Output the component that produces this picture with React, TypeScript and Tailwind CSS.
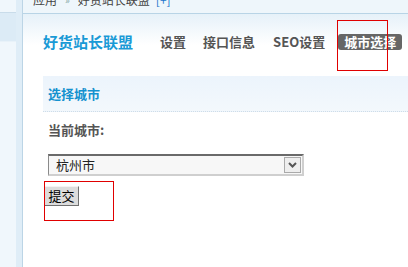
import React from "react";

const cjk = { fontFamily: '"Noto Sans CJK SC", "Noto Sans", sans-serif' };

export default function App() {
  return (
    <div className="relative w-[408px] h-[267px] overflow-hidden bg-white flex" style={cjk}>
      {/* sidebar */}
      <div className="w-[23px] h-full flex border-r border-[#bcd5e6] bg-[#dfedf7]">
        <div className="w-[16px] h-full flex flex-col bg-[#f0f7fc]">
          <div className="h-[13px] border-b border-[#c9dcea]" />
          <div className="h-[29px] bg-[#dcebf6] border-b border-[#e8f2f9]" />
          <div className="flex-1" />
        </div>
      </div>

      {/* main */}
      <div className="flex-1 flex flex-col">
        {/* top bar */}
        <div className="h-[14px] bg-[#eef6fb] border-b border-[#b8d4e6] overflow-hidden">
          <div className="mt-[-7px] pl-[10px] text-[12px] leading-[14px] text-[#444] whitespace-nowrap flex items-center">
            <span>应用</span>
            <span className="mx-[8px] text-[10px] text-[#8aa]">»</span>
            <span>好货站长联盟</span>
            <span className="ml-[6px] text-[#2277cc]">[+]</span>
          </div>
        </div>

        {/* header */}
        <div className="h-[62px] bg-gradient-to-b from-[#e6f1f9] via-white to-white pt-[19px] flex items-start">
          <div className="h-[18px] flex items-center">
            <div className="ml-[20px] w-[90px] text-[15px] leading-[18px] font-bold text-[#1a9ad6] whitespace-nowrap">
              好货站长联盟
            </div>
            <div className="ml-[22px] flex items-center gap-[6px] text-[13px] font-bold text-[#555] whitespace-nowrap">
              <span className="px-[5px]">设置</span>
              <span className="px-[6px]">接口信息</span>
              <span className="px-[6px]">SEO设置</span>
              <span className="ml-[1px] px-[6px] h-[16px] leading-[16px] rounded-[3px] bg-[#666] text-white">城市选择</span>
            </div>
          </div>
        </div>

        {/* panel */}
        <div className="ml-[20px] flex-1 flex flex-col">
          <div className="h-[36px] bg-gradient-to-b from-[#ecf4fc] to-[#f3f8fc] border-b border-dotted border-[#cfdde8] flex items-center pl-[5px]">
            <span className="text-[13px] font-bold text-[#1592cf]">选择城市</span>
          </div>
          <div className="pl-[5px] pt-[11px] text-[13px] leading-[14px] font-bold text-[#555]">当前城市:</div>
          <div className="ml-[5px] mt-[17px] w-[256px] h-[22px] bg-[#f7f7f7] border-t-2 border-t-[#6a6a6a] border-l border-l-[#8a8a8a] border-r-2 border-r-[#cfcfcf] border-b-2 border-b-[#cfcfcf] flex items-center justify-between">
            <span className="pl-[7px] text-[13px] text-[#222]">杭州市</span>
            <div className="mr-[1px] w-[17px] h-[16px] border border-[#aaa] bg-[#eeeeee] flex items-center justify-center">
              <svg width="9" height="6" viewBox="0 0 9 6">
                <path d="M1 1 L4.5 4.5 L8 1" stroke="#555" strokeWidth="2" fill="none" />
              </svg>
            </div>
          </div>
          <div className="ml-[1px] mt-[10px]">
            <button className="w-[35px] h-[20px] bg-[#dcdcdc] border border-t-[#f4f4f4] border-l-[#f4f4f4] border-r-[#707070] border-b-[#707070] text-[13px] leading-[16px] text-black flex items-center justify-center">
              提交
            </button>
          </div>
        </div>
      </div>

      {/* annotations */}
      <div className="absolute left-[337px] top-[20px] w-[51px] h-[51px] border border-[#e00000]" />
      <div className="absolute left-[44px] top-[181px] w-[70px] h-[40px] border border-[#e00000]" />
    </div>
  );
}
